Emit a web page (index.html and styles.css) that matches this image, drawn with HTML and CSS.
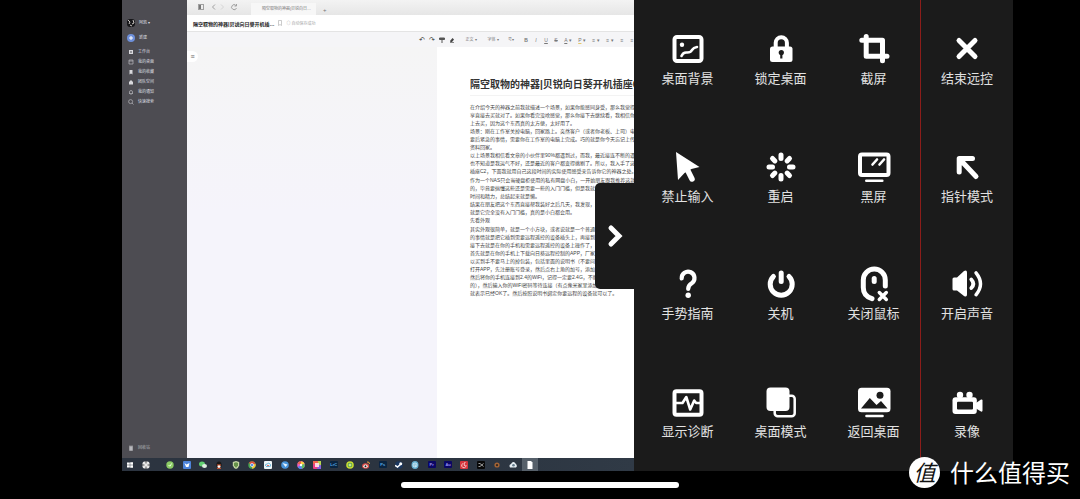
FILE: index.html
```html
<!DOCTYPE html>
<html lang="zh-CN">
<head>
<meta charset="utf-8">
<title>远程控制</title>
<link rel="stylesheet" href="styles.css">
</head>
<body>
<div class="phone">
  <div class="screen">
    <main class="desktop">
      <div class="app">
        <nav class="side">
          <div class="user"><svg class="avatar" viewBox="0 0 8 8"><rect width="8" height="8" rx="3" fill="#17171a"/><path d="M1 1l2 2-1 2M6 1l1 3-2 1M3 6l2 1" stroke="#c9c5c2" fill="none"/></svg><span>阿凯 ▾</span></div>
          <button class="new"><svg viewBox="0 0 8 8"><circle cx="4" cy="4" r="4" fill="#6d8fda"/><path d="M4 2v4M2 4h4" stroke="#fff"/></svg><span>新建</span></button>
          <a class="link" href="#"><svg viewBox="0 0 6 6"><path d="M1 1h4v4H1z" fill="#d8d8dc"/><path d="M3 2v2" stroke="#55555b"/></svg>工作台</a>
          <a class="link" href="#"><svg viewBox="0 0 6 6"><path d="M1 1h4v4H1zM1 2h4" fill="none" stroke="#b8b8bd" stroke-width=".7"/></svg>我的桌面</a>
          <a class="link" href="#"><svg viewBox="0 0 6 6"><path d="M1.500 1h3v4.500l-1.500-1-1.500 1z" fill="#d8d8dc"/></svg>我的收藏</a>
          <a class="link" href="#"><svg viewBox="0 0 6 6"><path d="M1 3l2-2 2 2v2.500H1z" fill="#d8d8dc"/></svg>团队空间</a>
          <a class="link" href="#"><svg viewBox="0 0 6 6"><path d="M1 4.500h4M1.500 4.500V3a1.500 1.500 0 0 1 3 0v1.500M2.500 5.500h1" fill="none" stroke="#b8b8bd" stroke-width=".7"/></svg>我的通知</a>
          <a class="link" href="#"><svg viewBox="0 0 6 6"><circle cx="2.600" cy="2.600" r="2" fill="none" stroke="#b8b8bd" stroke-width=".7"/><path d="M4 4l1.500 1.500" stroke="#b8b8bd" stroke-width=".7"/></svg>快速搜索</a>
          <a class="link trash" href="#"><svg viewBox="0 0 6 6"><path d="M1.500 1.500h3v4h-3zM1 1h4" fill="#b8b8bd" stroke="#b8b8bd" stroke-width=".5"/></svg>回收站</a>
        </nav>
        <section class="window">
          <div class="tabs">
            <svg class="nav" viewBox="0 0 56 8" fill="none" stroke="#a0a0a0"><rect x="3.500" y="1.500" width="5" height="5"/><path d="M4 2h2v4H4z" fill="#777" stroke="none"/><path d="M20 1.500L17.500 4 20 6.500"/><path d="M26 1.500L28.500 4 26 6.500" stroke="#d5d5d5"/><path d="M41 2.500A2.500 2.500 0 1 0 41.500 5M41.500 1v2H39.500"/></svg>
            <div class="tab">隔空取物的神器|贝锐向日…</div>
            <span class="plus">+</span>
          </div>
          <div class="head">
            <strong>隔空取物的神器|贝锐向日葵开机插…</strong>
            <svg viewBox="0 0 6 6"><path d="M1.500.5h3v5l-1.500-1-1.500 1z" fill="none" stroke="#aaa" stroke-width=".6"/></svg>
            <span>◎ 自动保存成功</span>
          </div>
          <div class="tools">
            <button>↶</button><button>↷</button><button><svg viewBox="0 0 6 6"><path d="M.5 1h5v1.500H.5zM3 2v4" fill="#555" stroke="#555"/></svg></button><button><svg viewBox="0 0 6 6"><path d="M1 4l2.500-3L5 2.500 3 5H1.500z" fill="#444"/><path d="M1 5.500h4" stroke="#888"/></svg></button>
            <button class="drop first">正文 ▾</button><button class="drop">字体 ▾</button><button class="drop size">号▾</button>
            <button><b>B</b></button><button><i>I</i></button><button><u>U</u></button><button><s>S</s></button>
            <button class="pick"><u>A</u> ▾</button><button class="pick mark"><u>P</u> ▾</button><button class="pick">≡ ▾</button><button class="pick">≡ ▾</button><button>≡</button><button>≡</button>
          </div>
          <div class="work">
            <button class="outline" aria-label="目录">≡</button>
            <article class="page">
              <h1>隔空取物的神器|贝锐向日葵开机插座C</h1>
              <p>在介绍今天的神器之前我就描述一个场景，如果你能感同身受，那么我觉得你<br>享直接去买就对了。如果你看完没啥感觉，那么你接下去继续看，我相信你不<br>上去买，因为这个东西真的太方便，太好用了。</p>
              <p>场景：刚在工作室关掉电脑，回家路上。突然客户（或者你老板、上司）电话<br>要后紧急的事情，需要你在工作室的电脑上完成。巧的就是你今天忘记上传网<br>资料回家。</p>
              <p>以上场景我相信看文章的小伙伴里90%都遇到过，而我，最近接连不断的遇到<br>也不知道是我运气不好，还是最近的客户都变得挑剔了。所以，我入手了这款<br>插座C2，下面我就用自己这段时间的实际使用感受来告诉你它的神器之处。</p>
              <p class="gap">作为一个NAS只会当硬盘柜使用的私有网盘小白，一开始朋友跟我推荐这款<br>的，毕竟要搞懂这些还是需要一些的入门门槛，但是我就是<br>时间和精力，总结起来就是懒。</p>
              <p>结果在朋友把这个东西直接帮我装好之后几天，我发现，这<br>就是它完全没有入门门槛，真的是小白都会用。</p>
              <p>先看外观</p>
              <p class="gap">其实外观很简单，就是一个小方块，或者说就是一个普通的<br>的事情就是把它插到需要远程遥控的设备插头上，再接到<br>接下去就是在你的手机和需要远程遥控的设备上操作了，再<br>首先就是在你的手机上下载向日葵远程控制的APP，厂家<br>以买到手不要马上的掉包装，包括里面的说明书（不要问<br>打开APP，先注册账号登录，然后点右上角的加号，添加<br>然后将你的手机连接到2.4的WiFi，记得一定要2.4G，不能<br>的），然后输入你的WiFi密码等待连接（有点像米家里添加<br>就表示已经OK了。然后按照说明书绑定你要远程的设备就可以了。</p>
            </article>
          </div>
        </section>
      </div>
      <div class="taskbar">
        <div class="start">
          <svg viewBox="0 0 8 8"><path d="M1 1.500h2.800v2.300H1zM4.200 1.300H7v2.500H4.200zM1 4.200h2.800v2.300H1zM4.200 4.200H7v2.500H4.200z" fill="#fff"/></svg>
          <svg viewBox="0 0 8 8"><rect x=".5" y=".5" width="7" height="7" rx="2" fill="#e8e8e8"/><path d="M4 0v2.500M4 5.500v2.500M0 4h2.500M5.500 4h2.500" stroke="#555"/></svg>
        </div>
        <div class="tasks">
          <span><svg viewBox="0 0 8 8"><circle cx="4" cy="4" r="3.700" fill="#8ccb65"/><path d="M2.500 4.500q2 2 3-2" stroke="#e6ffd8" fill="none"/></svg></span>
          <span><svg viewBox="0 0 8 8"><rect width="8" height="8" rx="1" fill="#4d83da"/><path d="M1.500 2l2 1.500L6.500 2 5.500 6 3 6z" fill="#fff"/></svg></span>
          <span><svg viewBox="0 0 8 8"><ellipse cx="3" cy="3" rx="3" ry="2.500" fill="#60cf70"/><ellipse cx="5.500" cy="5" rx="2.500" ry="2" fill="#e0eee0"/></svg></span>
          <span><svg viewBox="0 0 8 8"><ellipse cx="4" cy="4" rx="2.600" ry="3.500" fill="#181818"/><ellipse cx="4" cy="5.400" rx="1.500" ry="1.600" fill="#fff"/><path d="M2 4h4M2 7.300h4" stroke="#e2572d"/></svg></span>
          <span><svg viewBox="0 0 8 8"><path d="M4 0l3.200 1v3.500Q6.500 7 4 8 1.500 7 .8 4.500V1z" fill="#c4d6a4"/><path d="M4 1.200l2 .7v2.500L4 6.800 2 4.400V1.900z" fill="#65914a"/></svg></span>
          <span><svg viewBox="0 0 8 8"><circle cx="4" cy="4" r="3.700" fill="#49a853"/><path d="M4 4L.8 2A3.700 3.700 0 0 1 7.500 2.700z" fill="#df4c3c"/><path d="M4 4l3.500-1.300A3.700 3.700 0 0 1 4 7.700z" fill="#f3c53a"/><circle cx="4" cy="4" r="1.600" fill="#4e87e8" stroke="#fff" stroke-width=".6"/></svg></span>
          <span><svg viewBox="0 0 8 8"><rect width="8" height="8" rx="1" fill="#eef5f8"/><path d="M1.500 5q-.5-2 1.500-2 2-2 3.500.5Q7 6 5 5.500H2" fill="none" stroke="#52a7cf" stroke-width=".8"/><path d="M3 4.500h2" stroke="#e3716b"/></svg></span>
          <span><svg viewBox="0 0 8 8"><circle cx="4" cy="4" r="3.800" fill="#4894dc"/><path d="M1.500 2l5 1.500L4.500 6z" fill="#e7f5ff"/></svg></span>
          <span><svg viewBox="0 0 8 8"><circle cx="4" cy="4" r="3.800" fill="#ef5fc0"/><path d="M4 4V.2A3.800 3.800 0 0 1 7.500 3z" fill="#ffd43c"/><path d="M4 4l3.500-1A3.800 3.800 0 0 1 5 7.700z" fill="#56c262"/><path d="M4 4l1 3.700A3.800 3.800 0 0 1 .7 6z" fill="#4c8cf2"/><path d="M4 4L.5 2.500A3.800 3.800 0 0 1 4 .2z" fill="#ef6846"/><circle cx="4" cy="4" r="1.200" fill="#fff"/></svg></span>
          <span><svg viewBox="0 0 8 8"><rect width="8" height="8" rx="1" fill="#ec3e86"/><path d="M0 0h5v3H0z" fill="#f26550"/><path d="M5 0h3v4H5z" fill="#b6d64e"/><path d="M5 4h3v4H4z" fill="#8563df"/><rect x="2" y="2" width="4" height="4" fill="#ffd9e4"/></svg></span>
          <span><em class="lrc">LrC</em></span>
          <span><svg viewBox="0 0 8 8"><circle cx="4" cy="4" r="3.800" fill="#c8dd31"/><circle cx="4" cy="4" r="2.300" fill="#4d9c46"/><path d="M2.500 4h3M4 2.500v3" stroke="#f5f8a8"/></svg></span>
          <span><svg viewBox="0 0 8 8"><ellipse cx="3.600" cy="5" rx="3.500" ry="2.800" fill="#dd4b45"/><ellipse cx="3.500" cy="5.200" rx="2.100" ry="1.600" fill="#fff"/><circle cx="3.500" cy="5.200" r="1" fill="#222"/><path d="M5 1q2.500-.5 2.500 2" stroke="#f2a044" fill="none"/></svg></span>
          <span><em class="ps">Ps</em></span>
          <span><svg viewBox="0 0 8 8"><circle cx="4" cy="4" r="3.800" fill="#1c3860"/><path d="M0 4.500l2.500 1.500L6 3" stroke="#fff" stroke-width="1.500" fill="none"/><circle cx="5.700" cy="2.800" r="1.500" fill="#fff"/></svg></span>
          <span><svg viewBox="0 0 8 8"><ellipse cx="4" cy="4" rx="3.500" ry="4" fill="#66aecf"/><circle cx="4" cy="4" r="2" fill="none" stroke="#e5f5fb" stroke-width=".8"/><path d="M4 3v2h1" stroke="#fff" fill="none" stroke-width=".7"/></svg></span>
          <span><em class="pr">Pr</em></span>
          <span><em class="pr">Au</em></span>
          <span><svg viewBox="0 0 8 8"><rect width="8" height="8" rx="1" fill="#d6363d"/><path d="M5.500 1.500L4 2l.5 3M3 2.500a2.200 2.200 0 1 0 3 1.500" stroke="#fff" stroke-width=".7" fill="none"/></svg></span>
          <span><svg viewBox="0 0 8 8"><rect width="8" height="8" rx="1" fill="#080808"/><path d="M6.500 2.500L3 5.500H1.500M6.500 5.500L3 2.500H1.500" stroke="#ddd" stroke-width=".7" fill="none"/></svg></span>
          <span><svg viewBox="0 0 8 8"><circle cx="4" cy="4" r="2.600" fill="#a56435"/><circle cx="4" cy="4.200" r="1.100" fill="#34271e"/></svg></span>
          <span><svg viewBox="0 0 8 8"><path d="M1 6.500Q-.5 4 2 3q2-3.500 4.500-.5Q9 5 7 6.500z" fill="#e5edf2"/><circle cx="4.500" cy="4.300" r="1.300" fill="#657c8c"/></svg></span>
          <span class="active"><svg viewBox="0 0 8 8"><path d="M1.500 0h3.500l1.500 1.500V8h-5z" fill="#fff"/></svg></span>
        </div>
      </div>
    </main>

    <aside class="panel">
      <button class="handle" aria-label="收起"><svg viewBox="0 0 16 24"><path d="M4 4l8 8-8 8" fill="none" stroke="#fff" stroke-width="5" stroke-linecap="round"/></svg></button>
      <button class="cell"><svg viewBox="0 0 34 34"><rect x="3.500" y="5" width="27" height="24" rx="2.500" class="ln" stroke-width="4"/><circle cx="11" cy="12.700" r="2.200" class="fl"/><path class="ln" stroke-width="2.600" d="M10.500 24Q12 20.500 15 20.500 19.500 21 21 18 22.500 15.500 26 15"/></svg>桌面背景</button>
      <button class="cell"><svg viewBox="0 0 34 34"><rect x="6" y="14.500" width="22.500" height="15.500" rx="2.500" class="fl"/><path class="ln" stroke-width="4" d="M11.700 16V10.800a5.600 5.600 0 0 1 11.200 0V16"/><circle cx="17.300" cy="20.500" r="2.600" class="bg"/><path d="M16.200 21h2.200v5.500h-2.200z" class="bg"/></svg>锁定桌面</button>
      <button class="cell"><svg viewBox="0 0 34 34"><path class="ln" stroke-width="5" d="M9.200 4.500V24.300H30M4.800 8.300H25.500V28.800"/></svg>截屏</button>
      <button class="cell end"><svg viewBox="0 0 34 34"><path class="ln" stroke-width="5" d="M9 8.500L25 24.500M25 8.500L9 24.500"/></svg>结束远控</button>

      <button class="cell"><svg viewBox="0 0 34 34"><path class="fl" d="M5 2L28.500 17 20.500 19 13.500 23 7 30z"/><path class="ln" stroke-width="5.500" d="M16 19L21 29"/></svg>禁止输入</button>
      <button class="cell"><svg viewBox="0 0 34 34"><path class="ln" stroke-width="5" d="M17 5v3.500M17 25.500v3.500M5 17h3.500M25.500 17h3.500M8.500 8.500l2.400 2.400M23.100 23.100l2.400 2.400M25.500 8.500l-2.400 2.400M10.900 23.100l-2.400 2.400"/></svg>重启</button>
      <button class="cell"><svg viewBox="0 0 34 34"><rect x="3" y="4.500" width="28.500" height="20.500" rx="2" class="ln" stroke-width="4"/><path class="ln" stroke-width="2.600" d="M15.500 14.500l4.500-5M22.500 14.500l4.500-5M9.300 30.700h16"/></svg>黑屏</button>
      <button class="cell end"><svg viewBox="0 0 34 34"><path class="ln" stroke-width="5" d="M9.200 22V8.500H22.500M10 9.500L26 26.500"/><path class="fl" d="M8 7h11l-9 10z"/></svg>指针模式</button>

      <button class="cell"><svg viewBox="0 0 34 34"><path class="ln" stroke-width="4.200" d="M10.700 11.500a6.400 6.400 0 1 1 10 4.800Q17.200 18.500 17.200 22"/><circle cx="17.200" cy="28.200" r="2.700" class="fl"/></svg>手势指南</button>
      <button class="cell"><svg viewBox="0 0 34 34"><path class="ln" stroke-width="5" d="M9.400 9.500A11 11 0 1 0 25 9.500M17.200 6v8.500"/></svg>关机</button>
      <button class="cell"><svg viewBox="0 0 34 34"><path class="ln" stroke-width="5" d="M15 31.700Q6.300 29 6.300 20.500V13a11 11 0 0 1 22 0v6"/><path class="ln" stroke-width="5" d="M17.200 11.500v3"/><path class="ln" stroke-width="3.500" d="M22.300 25.500l7 7M29.300 25.500l-7 7"/></svg>关闭鼠标</button>
      <button class="cell end"><svg viewBox="0 0 34 34"><path class="fl" d="M4 10.500h3L14 4q3-1.500 3 1.500v22q0 3-3 1.500L7 23.500H4q-1.500 0-1.500-1.500V12q0-1.500 1.500-1.500z"/><path class="ln" stroke-width="3.800" d="M21.300 12.500q4 4.300 0 8.500"/><path class="ln" stroke-width="3.400" d="M26 5.800q9 11 0 22"/></svg>开启声音</button>

      <button class="cell"><svg viewBox="0 0 34 34"><rect x="3.500" y="6.200" width="27" height="23.600" rx="2" class="ln" stroke-width="4"/><path class="ln" stroke-width="2.600" d="M5 18h6.500l3.800-6 3.900 12.500 4-9 2 2.500h4"/></svg>显示诊断</button>
      <button class="cell"><svg viewBox="0 0 34 34"><rect x="10.700" y="10.700" width="20" height="20.500" rx="3" class="ln" stroke-width="2.500"/><rect x="2.500" y="2.500" width="23" height="23.500" rx="4" class="fl"/></svg>桌面模式</button>
      <button class="cell"><svg viewBox="0 0 34 34"><rect x="1" y="2.700" width="32.500" height="24.500" rx="3.500" class="fl"/><path class="bg" d="M4 23.500L12.800 13l6.700 7 4.500-4 6.500 7.500z"/><circle cx="23" cy="10.300" r="3.500" class="bg"/><path class="ln" stroke-width="2.600" d="M9.500 31h16"/></svg>返回桌面</button>
      <button class="cell end"><svg viewBox="0 0 34 34"><rect x="2.500" y="12.300" width="24.300" height="16.700" rx="3" class="fl"/><circle cx="10" cy="10" r="3.200" class="fl"/><circle cx="19.500" cy="10" r="3.200" class="fl"/><path class="fl" d="M26 18l5-3.500q1.500-.5 1.500 1v10q0 1.500-1.500 1L26 23.500z"/><rect x="7" y="16.700" width="16" height="7.800" rx="1" class="bg"/></svg>录像</button>
    </aside>
  </div>
  <footer class="bottom"><span class="homebar"></span></footer>
  <div class="brand"><span class="seal">值</span><span>什么值得买</span></div>
</div>
</body>
</html>
```
FILE: styles.css
```css
* { box-sizing: border-box; }
body {
  margin: 0;
  background: #000;
  font-family: "Liberation Sans", "Noto Sans CJK SC", sans-serif;
}
button {
  margin: 0;
  padding: 0;
  border: 0;
  background: none;
  color: inherit;
  font: inherit;
}
a { color: inherit; text-decoration: none; }

.phone {
  position: relative;
  display: flex;
  flex-direction: column;
  min-height: 100vh;
}
.screen {
  flex: 1;
  display: flex;
  margin: 0 67px 0 122px;
}
.desktop {
  flex: 1;
  min-width: 0;
  display: flex;
  flex-direction: column;
  overflow: hidden;
}
.app { flex: 1; display: flex; }

/* sidebar */
.side {
  flex: none;
  width: 65px;
  display: flex;
  flex-direction: column;
  padding: 18px 0 5px 5px;
  background: #4d4c52;
  color: #dcdce0;
  font-size: 4px;
  line-height: 10px;
}
.user, .new, .link { display: flex; align-items: center; gap: 4px; }
.user { height: 10px; }
.user svg, .new svg { width: 8px; height: 8px; }
.new { height: 10px; margin: 5px 0 4px; }
.link { height: 10px; padding-left: 1px; gap: 4px; }
.link svg { width: 6px; height: 6px; }
.trash { margin-top: auto; color: #b4b4ba; }

/* browser window */
.window { flex: 1; min-width: 0; display: flex; flex-direction: column; }
.tabs {
  flex: none;
  height: 15px;
  display: flex;
  align-items: flex-end;
  padding-left: 8px;
  background: linear-gradient(#f3f3f3, #e6e6e6);
  color: #777;
  font-size: 4px;
}
.nav { width: 56px; height: 8px; margin-bottom: 4px; }
.tab {
  width: 65px;
  height: 12px;
  padding-left: 11px;
  background: #f7f7f7;
  line-height: 11px;
  white-space: nowrap;
}
.plus { margin-left: 7px; font-size: 6px; line-height: 10px; }
.head {
  flex: none;
  height: 17px;
  display: flex;
  align-items: center;
  gap: 3px;
  padding-left: 6px;
  background: #fff;
  border-bottom: 1px solid #e4e4e4;
  color: #a5a5a5;
  font-size: 4px;
  white-space: nowrap;
}
.head strong { color: #222; font-size: 5px; }
.head svg { width: 6px; height: 6px; }
.tools {
  flex: none;
  height: 15px;
  display: flex;
  align-items: center;
  padding-left: 230px;
  background: #f5f5f7;
  color: #777;
  font-size: 5px;
  line-height: 8px;
  overflow: hidden;
  white-space: nowrap;
}
.tools button { flex: none; width: 10px; }
.tools button:nth-child(-n+4) { color: #333; font-size: 7px; }
.tools svg { width: 6px; height: 6px; vertical-align: middle; }
.tools .drop { width: 18px; margin-right: 4px; font-size: 4px; }
.tools .first { margin-left: 5px; }
.tools .size { width: 10px; margin-right: 5px; }
.tools .pick { width: 14px; }
.mark u { text-decoration-color: #e5c86b; }
.work {
  flex: 1;
  display: flex;
  justify-content: space-between;
  align-items: stretch;
  background: linear-gradient(#f5f5f5, #f5f4fb 40%);
}
.outline {
  width: 11px;
  height: 11px;
  margin-top: 4px;
  border-radius: 0 6px 6px 0;
  background: #fff;
  color: #666;
  font-size: 7px;
  line-height: 10px;
}
.page {
  width: 197px;
  padding: 30px 0 0 33px;
  background: #fff;
  color: #444;
  font-size: 5px;
  line-height: 8px;
  white-space: nowrap;
  overflow: hidden;
}
.page h1 {
  margin: 0 0 7px;
  padding-bottom: 2px;
  border-bottom: 1px solid #f3f3f3;
  color: #333;
  font-size: 10px;
  line-height: 16px;
}
.page p { margin: 0; }
.page .gap { margin-top: 1px; }

/* taskbar */
.taskbar {
  flex: none;
  height: 13px;
  display: flex;
  background: linear-gradient(90deg, #2c3440, #2b3440 60%, #303a46);
}
.taskbar svg { width: 8px; height: 8px; }
.start { flex: none; width: 40px; display: flex; align-items: center; gap: 8px; padding-left: 4px; }
.tasks { flex: none; width: 376px; display: grid; grid-template-columns: repeat(23, 1fr); }
.tasks span { display: flex; align-items: center; justify-content: center; }
.tasks .active { background: #56606a; }
.tasks em {
  width: 8px;
  height: 7px;
  border-radius: 1px;
  font-size: 4px;
  font-style: normal;
  font-weight: bold;
  line-height: 7px;
  text-align: center;
}
.lrc, .ps { background: #0a2440; color: #58a8e0; }
.pr { background: #0b0764; color: #9a92f0; }

/* control panel */
.panel {
  position: relative;
  flex: none;
  width: 379px;
  display: grid;
  grid-template-columns: repeat(4, 1fr);
  grid-template-rows: repeat(4, 1fr);
  padding-left: 7px;
  background: #1b1b1b;
}
.cell {
  display: flex;
  flex-direction: column;
  align-items: center;
  justify-content: center;
  gap: 2px;
  padding-top: 2px;
  color: #e2e2e2;
  font-family: "Noto Sans CJK SC", sans-serif;
  font-size: 13px;
  line-height: 20px;
}
.cell svg { width: 34px; height: 34px; overflow: visible; }
.end { border-left: 1px solid #8c1d1a; }
.ln { fill: none; stroke: #fff; stroke-linecap: round; stroke-linejoin: round; }
.fl { fill: #fff; }
.bg { fill: #1b1b1b; }
.handle {
  position: absolute;
  left: -39px;
  top: calc(50% - 53px);
  width: 40px;
  height: 106px;
  border-radius: 5px 0 0 5px;
  background: #1b1b1b;
}
.handle svg { display: block; width: 16px; height: 24px; margin: 0 auto; }

/* bottom edge */
.bottom { height: 28px; display: flex; justify-content: center; align-items: center; }
.homebar { width: 278px; height: 6px; border-radius: 3px; background: #fff; }
.brand {
  position: absolute;
  right: 10px;
  bottom: 11px;
  display: flex;
  align-items: center;
  gap: 10px;
  color: #fff;
  font-family: "Noto Sans CJK SC", sans-serif;
  font-size: 24px;
  line-height: 32px;
}
.seal {
  width: 31px;
  height: 31px;
  border-radius: 50%;
  background: #fff;
  color: #111;
  font-size: 22px;
  font-style: italic;
  line-height: 28px;
  text-align: center;
}
```
